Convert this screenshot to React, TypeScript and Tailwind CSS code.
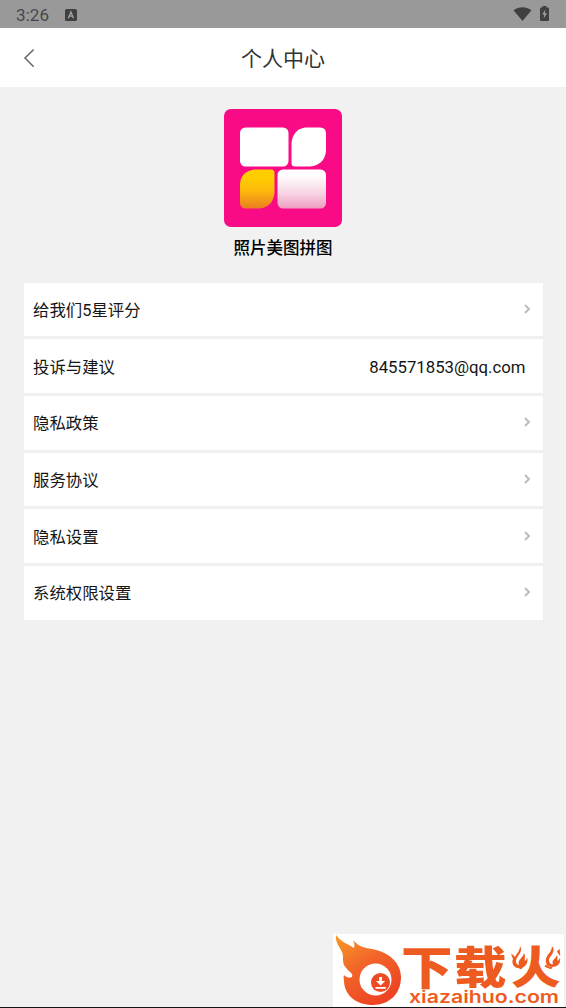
type MenuItem = {
  label: string;
  value?: string;
};

const menuItems: MenuItem[] = [
  { label: "给我们5星评分" },
  { label: "投诉与建议", value: "845571853@qq.com" },
  { label: "隐私政策" },
  { label: "服务协议" },
  { label: "隐私设置" },
  { label: "系统权限设置" },
];

function StatusBar() {
  return (
    <div className="flex h-7 shrink-0 items-center bg-[#999999] pr-[17px] pl-4 text-[#484848]">
      <span className="pt-0.5 text-[17px] leading-none tracking-[0.1px]">3:26</span>
      <svg className="mt-0.5 ml-4 h-3 w-3" viewBox="0 0 12 12">
        <rect width="12" height="12" rx="1.5" fill="#404040" />
        <path d="M3.3 9.2 5.9 3l2.6 6.2M4.3 7.2h3.2" fill="none" stroke="#a3a3a3" strokeWidth="1.3" />
      </svg>
      <svg className="ml-auto h-[15px] w-[19px]" viewBox="0 0 19 15" fill="#404040">
        <path d="M.5 3.2C5.700-.8 13.300-.8 18.500 3.200L9.500 14Z" />
      </svg>
      <svg className="mb-px ml-2 h-[15px] w-[9px]" viewBox="0 0 9 16" preserveAspectRatio="none">
        <path d="M2.500 1.500V0h4v1.500H8q1 0 1 1V15q0 1-1 1H1q-1 0-1-1V2.500q0-1 1-1Z" fill="#404040" />
        <path d="M5.400 3.700 2.200 9h2.100l-.6 4.300L7 7.800H4.800Z" fill="#a3a3a3" />
      </svg>
    </div>
  );
}

function Header() {
  return (
    <header className="grid h-[59px] shrink-0 grid-cols-[1fr_auto_1fr] items-center bg-white">
      <button className="pl-[23px]" aria-label="返回">
        <svg className="h-5 w-3" viewBox="0 0 12 20" fill="none" stroke="#666666" strokeWidth="1.5">
          <path d="M10.700 1.500 2 10l8.700 8.800" />
        </svg>
      </button>
      <h1 className="pt-[3px] text-[21px] leading-none font-normal text-[#333333]">个人中心</h1>
    </header>
  );
}

function AppIcon() {
  return (
    <svg className="h-[118px] w-[118px]" viewBox="0 0 118 118">
      <defs>
        <linearGradient id="tileYellow" x1="0" y1="0" x2="0" y2="1">
          <stop offset="0.2" stopColor="#ffcd00" />
          <stop offset="0.55" stopColor="#fcb90b" />
          <stop offset="1" stopColor="#ea7d20" />
        </linearGradient>
        <linearGradient id="tilePink" x1="0" y1="0" x2="0" y2="1">
          <stop offset="0.15" stopColor="#ffffff" />
          <stop offset="0.6" stopColor="#f8d5e4" />
          <stop offset="1" stopColor="#ee9dc2" />
        </linearGradient>
      </defs>
      <rect width="118" height="118" rx="7" fill="#f80b85" />
      <rect x="16" y="18.500" width="48.500" height="39" rx="5.500" fill="#ffffff" />
      <path
        d="M81 18.500h15q6 0 6 6V42q-1.500 14-16 15.500H71q-3.500 0-3.500-3.500V34q1.500-13.500 13.500-15.500Z"
        fill="#ffffff"
      />
      <path
        d="M30 60.500h17q3.500 0 3.500 3.500V84q-1.500 14-15 15.500H22q-6 0-6-6V75q1-12.500 14-14.500Z"
        fill="url(#tileYellow)"
      />
      <rect x="53.500" y="60.500" width="48.500" height="39" rx="5.500" fill="url(#tilePink)" />
    </svg>
  );
}

function MenuRow({ label, value }: MenuItem) {
  return (
    <li className="flex h-[53.700px] items-center justify-between bg-white pr-3 pl-[9.500px] shadow-[0_0_1px_#e4e4e4]">
      <span className="pt-[3px] text-[16.400px] leading-6">{label}</span>
      {value ? (
        <span className="pt-0.5 pr-[5px] text-[16.750px] leading-6">{value}</span>
      ) : (
        <svg className="mb-px h-2.5 w-2" viewBox="0 0 8 10" fill="none" stroke="#bbbbbb" strokeWidth="1.900">
          <path d="m2 1 4 4-4 4" />
        </svg>
      )}
    </li>
  );
}

function SiteLogo() {
  return (
    <svg className="h-[73px] w-[231px]" viewBox="0 0 231 73">
      <defs>
        <linearGradient id="flame" x1="0" y1="0" x2="0.600" y2="1">
          <stop offset="0" stopColor="#f99a27" />
          <stop offset="0.500" stopColor="#f26429" />
          <stop offset="1" stopColor="#ed4423" />
        </linearGradient>
      </defs>
      <rect width="231" height="73" fill="#ffffff" />
      <path
        d="M3 1c5 7 10 8 18 13 1-3 0-6-1-8 5 6 11 8 19 9 17 3 29 14 29 28 0 17-12 28-28 28C24 71 12 62 11 48c0-3-1-5 0-7 3 3 6 3 8 2 2-4-5-6-8-12-2-5 0-8-2-13C6 12 2 8 3 1Z"
        fill="url(#flame)"
      />
      <circle cx="42.500" cy="45.500" r="16" fill="#ffffff" />
      <circle cx="47.500" cy="48.500" r="9.500" fill="#ec4a25" />
      <path d="M46.200 43h2.800v4h3.200l-4.600 4.400L43 47h3.200ZM42.500 53h10.300v1.700H42.500Z" fill="#ffffff" />
      <g fill="#ee5b20">
        <g fontFamily="'Noto Sans CJK SC', sans-serif" fontSize="46" fontWeight="900">
          <text transform="translate(68 50) scale(1.120 1)">下</text>
          <text transform="translate(121 50) scale(1.140 .96)">载</text>
          <text transform="translate(178 50) scale(1.080 .98)">火</text>
        </g>
        <text
          x="76"
          y="69"
          fontFamily="Inter, sans-serif"
          fontSize="17"
          fontWeight="600"
          textLength="150"
          lengthAdjust="spacingAndGlyphs"
        >
          xiazaihuo.com
        </text>
      </g>
      {/* small flames on both sides of 火 */}
      <path d="M177 12h19v21H177ZM212 12H230v21h-13l-5-3Z" fill="#ffffff" />
      <g fill="#ee5b20">
        <path d="M187 12c4 6-4 10-4 15 0 3 2 4 3 4-2-5 4-7 5-12 2 4 0 6 1 8 1-1 2-2 2-4 2 6-2 11-7 11-6 1-9-5-7-9l-2-5c3 1 3 2 4 3 2-4 5-6 5-11Z" />
        <path d="M219 12c5 6-3 10-3 14 0 3 2 5 4 4-2-4 3-5 4-9 1 3 0 4 1 6l2-3c1 6-3 9-8 9-5 0-7-4-6-8 1-5 6-7 6-13ZM224 17l3-2c-1 3 1 5 0 7-1-2-3-3-3-5Z" />
      </g>
    </svg>
  );
}

export default function App() {
  return (
    <div className="flex h-[1008px] w-[566px] flex-col overflow-hidden bg-[#f1f1f1] font-[Roboto,'Noto_Sans_CJK_SC',sans-serif] text-[#151515]">
      <StatusBar />
      <Header />
      <main className="flex flex-1 flex-col">
        <section className="flex flex-col items-center pt-[21.500px]">
          <AppIcon />
          <h2 className="mt-2.5 text-[16.500px] leading-6 font-medium text-black">照片美图拼图</h2>
        </section>
        <ul className="mt-[22px] flex flex-col gap-[3px] px-[23.500px]">
          {menuItems.map((item) => (
            <MenuRow key={item.label} {...item} />
          ))}
        </ul>
      </main>
      <footer className="flex shrink-0 justify-end border-b border-[#151519] pr-0.5">
        <SiteLogo />
      </footer>
    </div>
  );
}
